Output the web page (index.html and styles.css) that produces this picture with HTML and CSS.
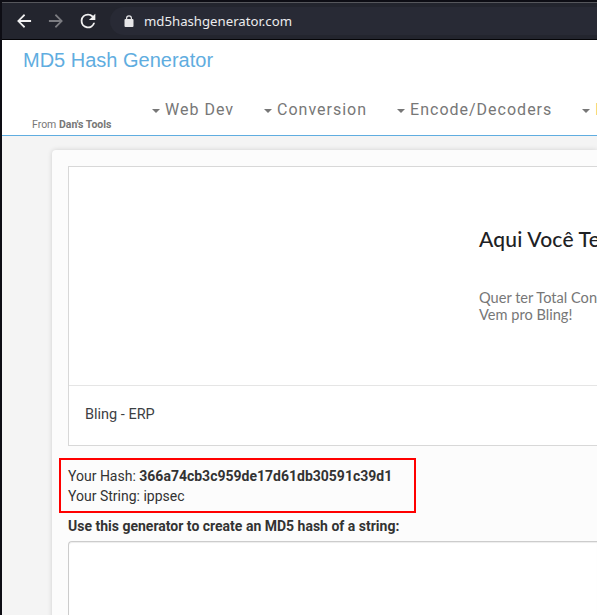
FILE: index.html
```
<!DOCTYPE html>
<html lang="en">
<head>
<meta charset="utf-8">
<title>MD5 Hash Generator</title>
<link rel="stylesheet" href="styles.css">
</head>
<body>
<div class="window">
  <div class="toolbar">
    <svg class="icon" viewBox="0 0 24 24"><path d="M20.5 10.8H7.83l5.59-5.4L12 3.7l-8.3 8.3 8.3 8.3 1.42-1.7-5.59-5.4H20.5z"/></svg>
    <svg class="icon icon-off" viewBox="0 0 24 24"><path d="M12 3.7l-1.42 1.7 5.59 5.4H3.5v2.4h12.67l-5.59 5.4L12 20.3l8.3-8.3z"/></svg>
    <svg class="icon reload" viewBox="0 0 24 24"><path d="M17.65 6.35A7.96 7.96 0 0 0 12 4a8 8 0 1 0 7.73 10h-2.08A6 6 0 1 1 12 6c1.66 0 3.14.69 4.22 1.78L13 11h7V4l-2.35 2.35z"/></svg>
    <div class="address">
      <svg class="lock" viewBox="0 0 10 12"><path fill-rule="evenodd" d="M2 4V3.2a3 3 0 0 1 6 0V4h.5A1 1 0 0 1 9.5 5v6a1 1 0 0 1-1 1h-7a1 1 0 0 1-1-1V5a1 1 0 0 1 1-1zM3.2 4h3.6v-.8a1.8 1.8 0 0 0-3.6 0z"/></svg>
      <span class="url">md5hashgenerator.com</span>
    </div>
  </div>
  <header class="header">
    <h1 class="title">MD5 Hash Generator</h1>
    <div class="bar">
      <div class="from">From <b>Dan's Tools</b></div>
      <nav class="nav">
        <a class="item"><i class="caret"></i>Web Dev</a>
        <a class="item"><i class="caret"></i>Conversion</a>
        <a class="item"><i class="caret"></i>Encode/Decoders</a>
        <a class="item"><i class="caret"></i><span class="gold">F</span></a>
      </nav>
    </div>
  </header>
  <main class="main">
    <section class="panel">
      <div class="ad">
        <div class="ad-body">
          <h2 class="ad-title">Aqui Você Te</h2>
          <p class="ad-text">Quer ter Total Con<br>Vem pro Bling!</p>
        </div>
        <div class="ad-brand">Bling - ERP</div>
      </div>
      <div class="result">
        <div>Your Hash: <b>366a74cb3c959de17d61db30591c39d1</b></div>
        <div>Your String: ippsec</div>
      </div>
      <label class="label">Use this generator to create an MD5 hash of a string:</label>
      <div class="input"></div>
    </section>
  </main>
</div>
</body>
</html>
```
FILE: styles.css
```
* { box-sizing: border-box; }
body { margin: 0; background: #0d0d14; font-family: Roboto, sans-serif; overflow: hidden; }
.window { width: 597px; height: 615px; padding: 2px 0 0 2px; overflow: hidden; white-space: nowrap; display: flex; flex-direction: column; }
.toolbar { flex: none; height: 38px; border-top: 1px solid #56575c; border-bottom: 1px solid #050508; background: #23252e; display: flex; align-items: center; padding-left: 12px; }
.icon { width: 20px; height: 20px; margin-right: 12px; fill: #f1f1f1; flex: none; }
.icon-off { fill: #7b7c81; }
.reload { width: 22px; height: 22px; margin: 0 11px 0 -1px; }
.address { flex: 1; height: 28px; padding-left: 14px; border-radius: 14px 0 0 14px; background: #282a35; display: flex; align-items: center; }
.lock { width: 10px; height: 12px; fill: #e6e6e8; margin-right: 10px; }
.url { font: 13.2px/20px "Noto Sans", sans-serif; color: #ececee; }
.header { flex: none; height: 96px; background: #fff; border-bottom: 1px solid #5fade0; }
.title { margin: 0; padding: 8px 0 0 21px; font: 400 20px/24px "Liberation Sans", sans-serif; color: #5fade0; }
.bar { display: flex; align-items: flex-start; color: #777; }
.from { flex: none; width: 150px; padding: 46px 0 0 30px; font-size: 10.5px; line-height: 14px; }
.nav { display: flex; gap: 30px; padding-top: 28px; font-size: 16px; line-height: 20px; letter-spacing: 1px; }
.item { display: flex; align-items: center; }
.caret { border: 4px solid transparent; border-top-color: #777; border-bottom: 0; margin: 2px 5px 0 0; }
.gold { color: #e6b455; }
.main { flex: 1; min-height: 0; background: #f4f4f4; padding: 14px 0 0 50px; }
.panel { height: 600px; padding: 16px 0 0 16px; border-radius: 4px 0 0 0; background: #fcfcfc; box-shadow: 0 0 5px rgba(0,0,0,.15); color: #333; font-size: 14px; line-height: 20px; }
.ad { height: 280px; border: 1px solid #d8d8d8; border-right: 0; background: #fff; overflow: hidden; }
.ad-body { height: 219px; padding: 58px 0 0 410px; border-bottom: 1px solid #e5e5e5; }
.ad-title { margin: 0; font: 500 21px/28px Lato, sans-serif; letter-spacing: .2px; color: #202124; }
.ad-text { margin: 36px 0 0; font: 14.6px/17px Lato, sans-serif; color: #777; }
.ad-brand { padding: 19px 0 0 16px; font: 14.5px/20px Roboto, sans-serif; color: #3c4043; }
.result { width: 357px; height: 55px; margin: 12px 0 0 -9px; padding: 6px 7px; border: 2px solid #f00; }
.label { display: block; margin-top: 3px; font-weight: 700; }
.input { height: 140px; margin-top: 5px; border: 1px solid #ccc; border-right: 0; border-radius: 4px 0 0 4px; background: #fff; box-shadow: inset 0 1px 1px rgba(0,0,0,.075); }
```
